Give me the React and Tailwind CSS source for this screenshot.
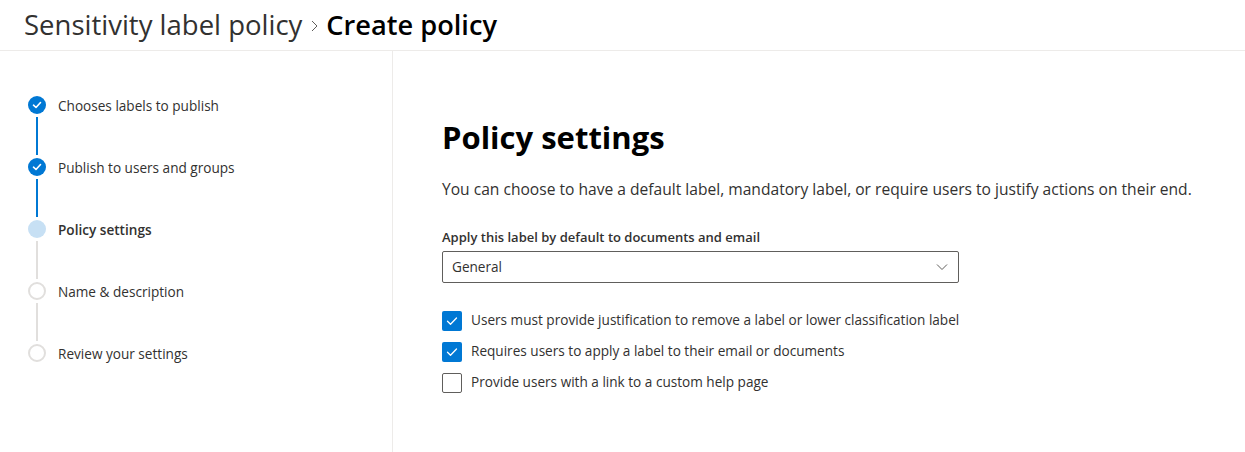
import React from "react";

const font = { fontFamily: '"Open Sans", "Noto Sans", Arial, sans-serif' };

function Step({ state, label, line, last }) {
  return (
    <div className="flex">
      <div className="flex flex-col items-center w-[18px]">
        {state === "done" && (
          <div className="w-[18px] h-[18px] rounded-full bg-[#0078d4] flex items-center justify-center">
            <svg width="10" height="10" viewBox="0 0 10 10">
              <path d="M1.5 5.2 L4 7.5 L8.5 2.5" fill="none" stroke="white" strokeWidth="1.6" strokeLinecap="round" strokeLinejoin="round" />
            </svg>
          </div>
        )}
        {state === "current" && <div className="w-[18px] h-[18px] rounded-full bg-[#c7e0f4]" />}
        {state === "todo" && <div className="w-[18px] h-[18px] rounded-full border-2 border-[#e1dfdd] bg-white" />}
        {!last && (
          <div className={`w-[2px] h-[38px] mt-[3px] mb-[3px] ${line === "blue" ? "bg-[#0078d4]" : "bg-[#e1dfdd]"}`} />
        )}
      </div>
      <div className={`ml-[12px] text-[13.6px] leading-[18px] pt-[1px] text-[#323130] ${state === "current" ? "font-semibold" : ""}`}>
        {label}
      </div>
    </div>
  );
}

function Checkbox({ checked, label }) {
  return (
    <div className="flex items-center h-[31px]">
      {checked ? (
        <div className="w-[20px] h-[20px] bg-[#0078d4] rounded-[2px] flex items-center justify-center">
          <svg width="14" height="14" viewBox="0 0 14 14">
            <path d="M2.5 7.3 L5.5 10.2 L11.5 4" fill="none" stroke="white" strokeWidth="1.3" strokeLinecap="round" strokeLinejoin="round" />
          </svg>
        </div>
      ) : (
        <div className="w-[20px] h-[20px] border border-[#605e5c] rounded-[2px] bg-white" />
      )}
      <span className="ml-[9px] text-[13.6px] text-[#323130]">{label}</span>
    </div>
  );
}

export default function App() {
  return (
    <div className="w-[1245px] h-[452px] bg-white overflow-hidden" style={font}>
      <div className="h-[51px] border-b border-[#edebe9] flex items-center pl-[24px]">
        <span className="text-[27.5px] text-[#323130]">Sensitivity label policy</span>
        <svg width="10" height="14" viewBox="0 0 10 14" className="mx-[7px] mt-[2px]">
          <path d="M3 2 L8 7 L3 12" fill="none" stroke="#605e5c" strokeWidth="1" />
        </svg>
        <span className="text-[27.2px] font-semibold text-black">Create policy</span>
      </div>
      <div className="flex h-[401px]">
        <div className="w-[393px] border-r border-[#edebe9] pl-[28px] pt-[45px] shrink-0">
          <Step state="done" label="Chooses labels to publish" line="blue" />
          <Step state="done" label="Publish to users and groups" line="blue" />
          <Step state="current" label="Policy settings" line="gray" />
          <Step state="todo" label="Name & description" line="gray" />
          <Step state="todo" label="Review your settings" last />
        </div>
        <div className="pl-[49px] pt-[66px]">
          <h1 className="text-[31px] font-bold text-black leading-[40px]">Policy settings</h1>
          <p className="mt-[21px] text-[15.6px] text-[#323130] leading-[22px]">
            You can choose to have a default label, mandatory label, or require users to justify actions on their end.
          </p>
          <div className="mt-[27px] text-[13px] font-semibold text-[#323130] leading-[20px]">
            Apply this label by default to documents and email
          </div>
          <div className="mt-[4px] w-[517px] h-[32px] border border-[#605e5c] rounded-[2px] flex items-center justify-between px-[9px]">
            <span className="text-[13.6px] text-[#323130]">General</span>
            <svg width="12" height="8" viewBox="0 0 12 8" className="mr-[1px]">
              <path d="M1 1.5 L6 6.5 L11 1.5" fill="none" stroke="#605e5c" strokeWidth="1" />
            </svg>
          </div>
          <div className="mt-[22px]">
            <Checkbox checked label="Users must provide justification to remove a label or lower classification label" />
            <Checkbox checked label="Requires users to apply a label to their email or documents" />
            <Checkbox label="Provide users with a link to a custom help page" />
          </div>
        </div>
      </div>
    </div>
  );
}
